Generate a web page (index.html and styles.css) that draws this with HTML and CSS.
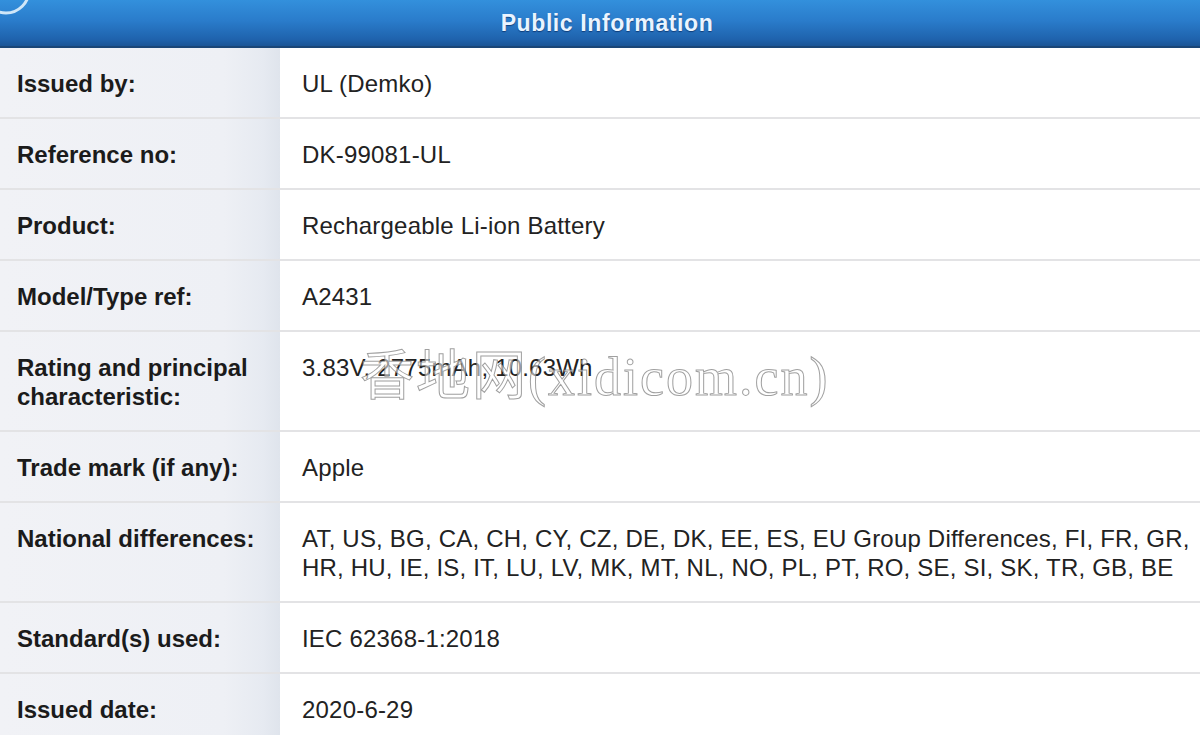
FILE: index.html
```html
<!DOCTYPE html>
<html lang="en">
<head>
  <meta charset="UTF-8" />
  <title>Public Information</title>
  <link rel="stylesheet" href="styles.css">
</head>
<body>
  <div class="page">
    <!-- Blue title bar -->
    <div class="header">
      <svg class="logo" width="80" height="40" viewBox="0 0 80 40">
        <circle cx="6" cy="-10" r="23" fill="none" stroke="#cfe6f8" stroke-width="3" />
      </svg>
      <span class="title">Public Information</span>
    </div>

    <!-- Certificate details -->
    <div class="info-table">
      <div class="row">
        <div class="label">Issued by:</div>
        <div class="value">UL (Demko)</div>
      </div>
      <div class="row">
        <div class="label">Reference no:</div>
        <div class="value">DK-99081-UL</div>
      </div>
      <div class="row">
        <div class="label">Product:</div>
        <div class="value">Rechargeable Li-ion Battery</div>
      </div>
      <div class="row">
        <div class="label">Model/Type ref:</div>
        <div class="value">A2431</div>
      </div>
      <div class="row">
        <div class="label">Rating and principal characteristic:</div>
        <div class="value">3.83V, 2775mAh, 10.63Wh</div>
      </div>
      <div class="row">
        <div class="label">Trade mark (if any):</div>
        <div class="value">Apple</div>
      </div>
      <div class="row">
        <div class="label">National differences:</div>
        <div class="value">AT, US, BG, CA, CH, CY, CZ, DE, DK, EE, ES, EU Group Differences, FI, FR, GR, HR, HU, IE, IS, IT, LU, LV, MK, MT, NL, NO, PL, PT, RO, SE, SI, SK, TR, GB, BE</div>
      </div>
      <div class="row">
        <div class="label">Standard(s) used:</div>
        <div class="value">IEC 62368-1:2018</div>
      </div>
      <div class="row">
        <div class="label">Issued date:</div>
        <div class="value">2020-6-29</div>
      </div>
    </div>

    <!-- Site watermark laid over the table -->
    <div class="watermark">香地网(xidicom.cn)</div>
  </div>
</body>
</html>
```

FILE: styles.css
```css
html, body {
  margin: 0;
  padding: 0;
}
body {
  font-family: "Liberation Sans", Arial, sans-serif;
  background: #fff;
  color: #222;
  overflow: hidden;
}
.page {
  position: relative;
  width: 1200px;
}
.header {
  position: relative;
  height: 46px;
  background: linear-gradient(to bottom, #3390dc 0%, #2a7ccb 45%, #1f63ad 85%, #1b5596 100%);
  border-bottom: 2px solid #1a4677;
  display: flex;
  align-items: center;
  justify-content: center;
  overflow: hidden;
}
.logo {
  position: absolute;
  left: 0;
  top: 0;
}
.title {
  margin-left: 14px;
  font-weight: bold;
  font-size: 23px;
  color: #eaf4ff;
  text-shadow: 0 1px 1px rgba(0, 30, 80, 0.6);
  letter-spacing: 0.6px;
}
.info-table {
  display: flex;
  flex-direction: column;
}
.row {
  display: flex;
  border-bottom: 2px solid #e3e3e5;
}
.label {
  width: 263px;
  flex-shrink: 0;
  padding: 21px 0 19px 17px;
  line-height: 29px;
  font-weight: bold;
  font-size: 24px;
  color: #1b1b1b;
  background: linear-gradient(to right, #f1f2f6 0%, #eef0f5 80%, #e6eaf1 94%, #dfe4ec 100%);
}
.value {
  flex: 1;
  padding: 21px 6px 19px 22px;
  line-height: 29px;
  font-size: 24px;
  color: #222;
  letter-spacing: 0.2px;
}
.watermark {
  position: absolute;
  left: 360px;
  top: 332px;
  font-family: "Liberation Serif", "Noto Sans CJK SC", serif;
  font-size: 54px;
  color: rgba(255, 255, 255, 0.55);
  -webkit-text-stroke: 1px rgba(120, 120, 120, 0.7);
  letter-spacing: 2px;
  white-space: nowrap;
  pointer-events: none;
}
```
